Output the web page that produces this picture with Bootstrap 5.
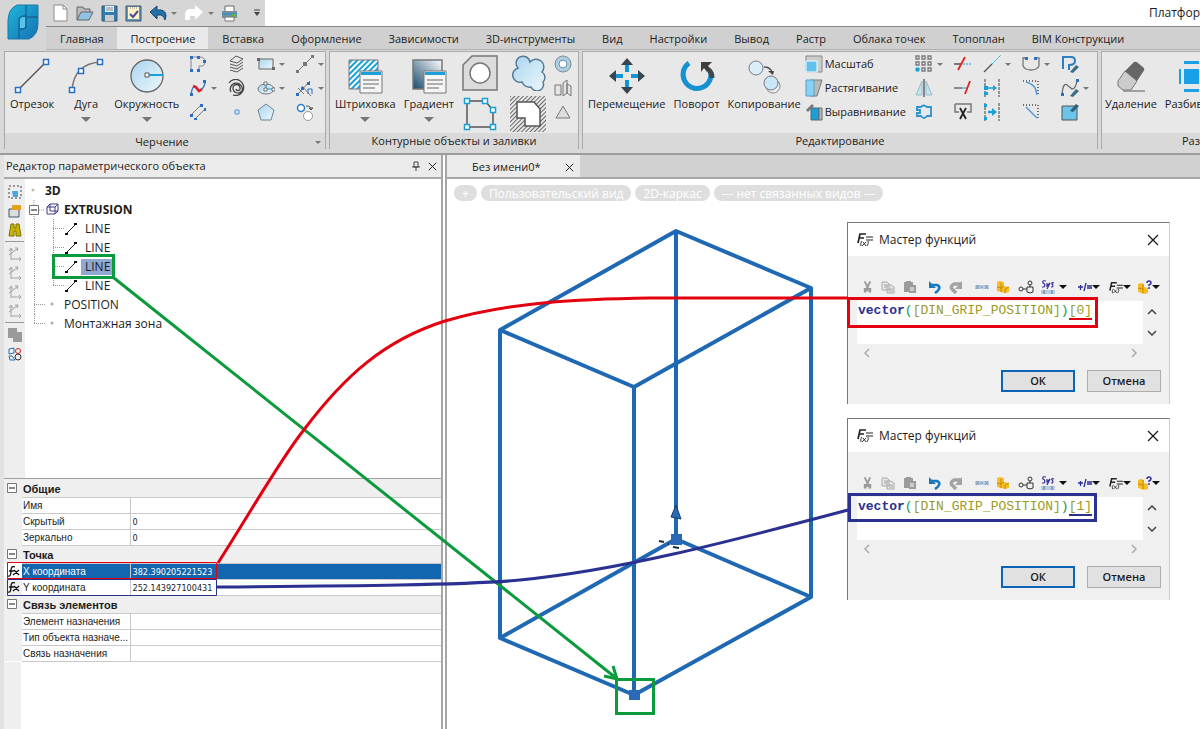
<!DOCTYPE html>
<html lang="ru">
<head>
<meta charset="utf-8">
<meta name="viewport" content="width=device-width, initial-scale=1">
<title>Платформа</title>
<link href="https://cdn.jsdelivr.net/npm/bootstrap@5.3.0/dist/css/bootstrap.min.css" rel="stylesheet">
<style>
  body { font: 12px/16px "Open Sans", "Noto Sans", sans-serif; color: #1c1c1c; background: #fff; }
  button { font: inherit; color: inherit; background: none; border: 0; padding: 0; }
  svg { display: block; flex: none; }

  /* title bar and tabs */
  .app-head { background: #d0d0d0; }
  .app-logo { width: 46px; flex: none; background: #d6d6d6; }
  .app-title { height: 26px; background: #fff; }
  .quick-bar { width: 219px; background: #d6d6d6; gap: 7px; padding-left: 7px; }
  .tab-strip { height: 24px; border-top: 1px solid #858585; border-bottom: 1px solid #b0b0b0; font-size: 11px; }
  .tab-strip a { color: inherit; text-decoration: none; padding: 4px 13px 0 14px; white-space: nowrap; }
  .tab-strip a.active { background: #e9e9e9; }

  /* ribbon */
  .ribbon { background: #d9d9d9; height: 105px; padding: 1px 0 4px 4px; gap: 3px; border-bottom: 2px solid #9c9c9c; font-size: 11px; }
  .tool-group { background: #e8e8e8; border: 1px solid #a9a9a9; }
  .group-draw { width: 322px; }
  .group-fill { width: 250px; }
  .group-edit { width: 516px; }
  .group-more { border-right: 0; min-width: 0; }
  .tools { height: 81px; padding: 0 0 0 1px; }
  .group-name { height: 18px; background: #d9d9d9; }
  .tool-big { display: flex; flex-direction: column; align-items: center; padding: 6px 4px 0; white-space: nowrap; }
  .tool-big span { margin-top: 2px; }
  .group-more .tool-big { padding-left: 2px; padding-right: 0; }
  .gap-a { gap: 6px; }
  .tool-cols { display: flex; gap: 5px; }
  .tool-col { width: 34px; flex: none; }
  .tool-col.slim { width: 24px; }
  .tool-col button, .tool-line { height: 24px; display: flex; align-items: center; gap: 4px; }
  .tool-line { white-space: nowrap; gap: 2px; }
  .tool-med { height: 41px; display: flex; align-items: center; }
  .caret { width: 0; height: 0; border: 3px solid transparent; border-top-color: #777; border-bottom: 0; display: block; flex: none; }
  .caret-lg { border-width: 5px; border-bottom: 0; margin-top: 5px; }
  .caret-dk { border-width: 4px; border-top-color: #111; border-bottom: 0; }

  /* object editor */
  .editor { width: 443px; border-left: 4px solid #e2e2e2; border-right: 2px solid #a6a6a6; }
  .pane-title { height: 24px; background: #ebebeb; border-bottom: 2px solid #aaa; padding: 0 4px 0 2px; font-size: 11px; }
  .tree-area { height: 300px; border-bottom: 1px solid #a0a0a0; }
  .side-bar { width: 21px; background: #eee; padding-top: 3px; }
  .side-bar button { height: 19px; display: flex; justify-content: center; align-items: center; width: 100%; }
  .side-bar hr { margin: 2px 1px; opacity: 1; border-color: #999; }
  .tree-list { padding-top: 2px; font-size: 12px; }
  .tree-list li { height: 19px; display: flex; align-items: center; }
  .tree-list .picked { background: #8fa9d3; }
  .prop-table { width: 100%; font: 10px/12px "Liberation Sans", Arial, sans-serif; border-collapse: collapse; table-layout: fixed; }
  .prop-table td, .prop-table th { padding: 2px 1px 0; border-bottom: 1px solid #c9c9c9; height: 16px; white-space: nowrap; overflow: hidden; font-weight: 400; }
  .prop-table td { border-left: 1px solid #c9c9c9; }
  .prop-table .sect th { height: 18px; background: #efefef; font-weight: 700; font-size: 11px; }
  .prop-table .tick-cell { background: #efefef; border-bottom: 0; padding: 0 3px; }
  .prop-table .now th, .prop-table .now td { background: #1266b0; color: #fff; }
  .prop-table .now .tick-cell { background: #fff; }
  .prop-table td { font-family: "DejaVu Sans Condensed", "Liberation Sans", sans-serif; font-size: 9px; padding-left: 2px; }
  .fill-strip { width: 17px; background: #efefef; }
  .c-tick { width: 18px; } .c-name { width: 108px; }

  /* drawing */
  .doc-area { border-left: 2px solid #a6a6a6; margin-left: 2px; }
  .doc-tabs { height: 24px; background: #d1d1d1; border-bottom: 2px solid #a6a6a6; }
  .doc-tab { width: 133px; background: #ebebeb; padding: 2px 6px 0 25px; font-size: 11px; }
  .view-pill { background: #dedede; color: #fff; border-radius: 8px; height: 16px; line-height: 15px; font-size: 12px; padding: 0 8px; }
  .view-bar { padding: 6px 7px; gap: 4px; }
  .model { left: 46px; top: 65px; }
  .marks { left: 0; top: 0; pointer-events: none; z-index: 5; }
  .workspace { z-index: 0; }

  /* function wizard windows */
  .wizard { width: 323px; background: #f0f0f0; border: 1px solid #777; border-right-color: #ccc; border-bottom: 0; left: 400px; height: 182px; }
  .wizard-1 { top: 67px; }
  .wizard-2 { top: 263px; }
  .wizard-head { height: 33px; background: #fff; padding: 0 10px 0 8px; gap: 6px; }
  .wizard-tools { height: 22px; margin: 20px 0 3px; padding: 0 9px 0 13px; }
  .code-line { height: 43px; width: 286px; margin-left: 9px; background: #fff; font: 13px/20px "Liberation Mono", monospace; color: #9a9a1c; padding-left: 1px; }
  .code-line b { color: #2a3190; } .code-line i { color: #159a3a; font-style: normal; }
  .code-line u { text-decoration: none; border-bottom: 2px solid #e3000f; }
  .wizard-2 .code-line u { border-color: #2a3190; }
  .wizard-btn { width: 74px; height: 22px; background: #e1e1e1; border: 1px solid #adadad; font-size: 11px; line-height: 18px; font-weight: 600; }
  .wizard-btn.main { border: 2px solid #0a64b8; }
  .wizard-foot { gap: 12px; padding: 9px 8px 0 0; }
</style>
</head>
<body class="d-flex flex-column min-vh-100 overflow-hidden">

<svg width="0" height="0" class="position-absolute" aria-hidden="true">
  <defs>
    <linearGradient id="sky" x1="0" y1="0" x2="1" y2="1"><stop offset="0" stop-color="#a9d5ef"/><stop offset="1" stop-color="#eef7fc"/></linearGradient>
    <linearGradient id="logo" x1="0" y1="0" x2="1" y2="1"><stop offset="0" stop-color="#1fb6d8"/><stop offset="1" stop-color="#1570b4"/></linearGradient>
    <linearGradient id="dusk" x1="0" y1="1" x2="1" y2="0"><stop offset="0" stop-color="#17496b"/><stop offset="1" stop-color="#fff"/></linearGradient>
    <pattern id="hatch" width="4" height="4" patternUnits="userSpaceOnUse" patternTransform="rotate(45)"><rect width="4" height="4" fill="#fff"/><rect width="2" height="4" fill="#18a0d8"/></pattern>
    <pattern id="hatch2" width="3" height="3" patternUnits="userSpaceOnUse" patternTransform="rotate(45)"><rect width="1" height="3" fill="#666"/></pattern>
    <symbol id="list-card" viewBox="0 0 24 24"><path d="M1 1h22v22H1z" fill="#f5f5f5" stroke="#777"/><path d="M2 2h20v3H2z" fill="#18a0d8"/><path d="M4 10h16M4 14h16M4 18h12" stroke="#666"/></symbol>
    <symbol id="axes" viewBox="0 0 16 16"><path d="M4 14V3M2 5l2-3 2 3M4 13h10M12 11l2 2-2 2M2 9l8-6M8 2l3 0-1 3" fill="none" stroke="#a3a3a3"/></symbol>
    <symbol id="seg" viewBox="0 0 14 14"><path d="M2 12 12 2" stroke="#222"/><path d="M1 11h3v2H1zM10 1h3v2h-3z" fill="#111"/></symbol>
    <symbol id="minus-box" viewBox="0 0 10 10"><path d="M.5.5h9v9h-9z" fill="#fff" stroke="#777"/><path d="M2 5h6" stroke="#111"/></symbol>
    <symbol id="close-x" viewBox="0 0 12 12"><path d="m1 1 10 10M11 1 1 11" stroke="currentColor" stroke-width="1.3"/></symbol>
    <symbol id="func" viewBox="0 0 17 15"><path d="M2 11 4 2h6M3 6h5" fill="none" stroke="#222" stroke-width="1.700"/><path d="M10 5h7M10 8h7" stroke="#222" stroke-width="1.200"/><path d="M6 9q-2 2-1 5M12 9q1 2-1 5M7 10l3 4M10 10l-4 4" fill="none" stroke="#222" stroke-width=".9"/></symbol>
    <symbol id="cut" viewBox="0 0 14 14"><path d="m4 1 4 8M10 1 6 9" stroke="#999" stroke-width="2"/><path d="M3 8h8v5H8V11H6v2H3z" fill="#999"/></symbol>
    <symbol id="copy" viewBox="0 0 14 14"><path d="M1 2h5l2 2v6H1zM6 5h4l3 2v6H6z" fill="#e6e6e6" stroke="#aaa"/><path d="M8 9h4M8 11h4M3 5h3M3 7h3" stroke="#aaa"/></symbol>
    <symbol id="paste" viewBox="0 0 14 14"><path d="M1 2h2V1h5v1h2v3h3v8H6v-1H1z" fill="#9b9b9b"/><path d="M7 7h4v4H7z" fill="#ccc"/></symbol>
    <symbol id="undo" viewBox="0 0 14 14"><path d="M3 5h6q3 1 2 4-1 2-4 4" fill="none" stroke="#1a78bd" stroke-width="2.6"/><path d="m1 1v7h7z" fill="#1a78bd"/></symbol>
    <symbol id="redo" viewBox="0 0 14 14"><path d="M12 4H5Q1 6 3 9l4 4" fill="none" stroke="#a3a3a3" stroke-width="3.500"/><path d="M13 1v8H6z" fill="#a3a3a3"/></symbol>
    <symbol id="chain" viewBox="0 0 14 6"><path d="M0 1h14v4H0z" fill="#b6cfe4"/><path d="m1 1 3 4M4 1 1 5M5 3h3M10 1l3 4M13 1l-3 4" stroke="#7b93aa"/></symbol>
    <symbol id="cubes" viewBox="0 0 14 14"><path d="M1 2 4 1l4 1v4l5 1v5l-4 1-4-1-4-1z" fill="#f6bd26"/><path d="M1 7l4 1V3M5 8v4M8 6l-3 2M9 9v4M9 9l4-2" fill="none" stroke="#b57f00" stroke-width=".8"/></symbol>
    <symbol id="gears" viewBox="0 0 16 14"><circle cx="3" cy="9" r="2" fill="none" stroke="#333"/><path d="M5 9h4V7h6v5q-3 2-6 0V9M12 7V4" fill="none" stroke="#333"/><circle cx="12" cy="3" r="2" fill="#eee" stroke="#333"/></symbol>
    <symbol id="sys" viewBox="0 0 14 14"><path d="M5 1Q1 0 2 3q3 1 1 4H1M6 3v3l3-3-3 6M13 3q-3-1-2 1 2 2 0 3h-1" fill="none" stroke="#383098" stroke-width="1.2"/><path d="M0 10h14v4H0z" fill="#b6cfe4"/><path d="m2 10 2 4m0-4-2 4m8-4 2 4m0-4-2 4" stroke="#7b93aa"/></symbol>
    <symbol id="plusminus" viewBox="0 0 14 10"><path d="M0 5h5M2.500 3v5M8 1 6 9M9 4h5M9 6h5" stroke="#2a2f95" stroke-width="1.300"/></symbol>
    <symbol id="cubes-help" viewBox="0 0 14 14"><path d="M0 4l3-1 3 1v3l4 1v5l-4 1-6-2z" fill="#f6bd26"/><path d="M0 8l5 1V4M5 9v4" fill="none" stroke="#b57f00" stroke-width=".8"/><path d="M9 3q0-2 2-2t2 2q0 1-2 2v1M11 7v2" fill="none" stroke="#383098" stroke-width="1.500"/></symbol>
  </defs>
</svg>

<header class="app-head d-flex overflow-hidden">
  <a href="#" class="app-logo d-flex justify-content-center pt-1" aria-label="Меню приложения">
    <svg width="32" height="36" viewBox="0 0 32 36"><path d="M10 1h21v19q0 11-9 15H1V17Q1 5 10 1z" fill="url(#logo)" stroke="#1a78a8"/><path d="M19 1v21q0 3-3 3h-4v-9q0-4 5-4h2M12 25v10M19 13h12" fill="none" stroke="#13567f"/><path d="M13 24v-8q0-3 5-3v9q0 2-3 2z" fill="#56c4ec"/></svg>
  </a>
  <div class="flex-fill">
    <div class="app-title d-flex align-items-center">
      <div class="quick-bar d-flex align-items-center h-100 flex-shrink-0">
        <button aria-label="Новый"><svg width="16" height="18" viewBox="0 0 16 18"><path d="M1 1h9l4 4v12H1z" fill="#fff" stroke="#8c8c8c"/><path d="M10 1v4h4" fill="none" stroke="#8c8c8c"/></svg></button>
        <button aria-label="Открыть"><svg width="18" height="16" viewBox="0 0 18 16"><path d="M1 15V2h6l1 2h6v3" fill="#bbb" stroke="#666"/><path d="M1 15 5 7h12l-4 8z" fill="#8fc3e4" stroke="#666"/></svg></button>
        <button aria-label="Сохранить"><svg width="17" height="17" viewBox="0 0 17 17"><path d="M1 1h15v15H1z" fill="#2c7db3" stroke="#456"/><path d="M4 1h9v6H4z" fill="#e5eef4"/><path d="M4 10h9v6H4z" fill="#ccc"/><path d="M5 3h7M5 5h7" stroke="#888"/></svg></button>
        <button aria-label="Сохранить как"><svg width="17" height="17" viewBox="0 0 17 17"><path d="M1 1h15v15H1z" fill="#5b9cc5" stroke="#456"/><path d="M3 2h11v12H3z" fill="#fff3c4"/><path d="m5 9 3 3 5-6" fill="none" stroke="#4a4a9c" stroke-width="2"/><path d="M5 3h7" stroke="#888" stroke-dasharray="1 1"/></svg></button>
        <button class="d-flex align-items-center gap-1" aria-label="Отменить"><svg width="18" height="16" viewBox="0 0 18 16"><path d="m1 7 7-6v4h4q5 1 5 6l-1 4q-1-4-4-5H8v4z" fill="#2471a8" stroke="#174a70"/></svg><span class="caret"></span></button>
        <button class="d-flex align-items-center gap-1" aria-label="Повторить"><svg width="20" height="18" viewBox="0 0 20 18"><path d="M19 8 11 1v4H5Q1 6 1 11v5h5v-4h5v4z" fill="#fff"/></svg><span class="caret"></span></button>
        <button aria-label="Печать"><svg width="17" height="17" viewBox="0 0 17 17"><path d="M4 1h9v6H4z" fill="#fff" stroke="#666"/><path d="M1 6h15v7H1z" fill="#7c8e9a"/><path d="M1 8h15v2H1z" fill="#3e93c4"/><path d="M11 9h4v3h-4z" fill="#62b345"/><path d="M4 12h9v4H4z" fill="#fff" stroke="#777"/></svg></button>
        <button class="ms-2" aria-label="Настройка панели"><svg width="8" height="8" viewBox="0 0 8 8"><path d="M1 1h6" stroke="#444"/><path d="M1 3h6L4 7z" fill="#444"/></svg></button>
      </div>
      <span class="ms-auto text-nowrap">Платфор</span>
    </div>
    <nav class="tab-strip d-flex">
      <a href="#">Главная</a><a href="#" class="active">Построение</a><a href="#">Вставка</a><a href="#">Оформление</a><a href="#">Зависимости</a><a href="#">3D-инструменты</a><a href="#">Вид</a><a href="#">Настройки</a><a href="#">Вывод</a><a href="#">Растр</a><a href="#">Облака точек</a><a href="#">Топоплан</a><a href="#">BIM Конструкции</a>
    </nav>
  </div>
</header>

<div class="ribbon d-flex overflow-hidden">
  <section class="tool-group group-draw flex-shrink-0">
    <div class="tools d-flex gap-a">
      <button class="tool-big"><svg width="36" height="36" viewBox="0 0 36 36"><path d="M4 32 32 4" stroke="#555" stroke-width="1.500"/><path d="M1.500 29.500h5v5h-5zM29.500 1.500h5v5h-5z" fill="#fff" stroke="#2b6fc2" stroke-width="1.500"/></svg><span>Отрезок</span></button>
      <button class="tool-big"><svg width="36" height="36" viewBox="0 0 36 36"><path d="M4 32Q6 6 32 4" fill="none" stroke="#777" stroke-width="1.500"/><path d="M1.500 29.500h5v5h-5zM29.500 1.500h5v5h-5zM10.500 10.500h5v5h-5z" fill="#fff" stroke="#2b6fc2" stroke-width="1.500"/></svg><span>Дуга</span><i class="caret caret-lg"></i></button>
      <button class="tool-big px-0"><svg width="36" height="36" viewBox="0 0 36 36"><circle cx="18" cy="18" r="16" fill="url(#sky)" stroke="#666" stroke-width="1.300"/><path d="M20 17h14" stroke="#18a0d8" stroke-width="2"/><path d="M16 15h4v4h-4z" fill="#fff" stroke="#555"/></svg><span>Окружность</span><i class="caret caret-lg"></i></button>
      <div class="tool-cols ms-1">
        <div class="tool-col">
          <button aria-label="Полилиния"><svg width="18" height="18" viewBox="0 0 18 18"><path d="M2 16V2h9q5 0 5 5t-6 4v5" fill="none" stroke="#888"/><path d="M1 1h3v3H1zM8 1h3v3H8zM1 14h3v3H1zM8 14h3v3H8zM14 5h3v3h-3z" fill="#2b6fc2"/></svg></button>
          <button aria-label="Сплайн"><svg width="18" height="18" viewBox="0 0 18 18"><path d="M2 16Q3 7 6 8q4 7 7 2 3-3 3-8" fill="none" stroke="#3b73b9" stroke-width="1.300"/><path d="m4 7 3 1 3 4 3-2" fill="none" stroke="#e02030" stroke-width="2.500"/><path d="M1 14h3v3H1zM14 1h3v3h-3z" fill="#2b6fc2"/></svg><i class="caret"></i></button>
          <button aria-label="Мультилиния"><svg width="18" height="18" viewBox="0 0 18 18"><path d="M2 12 12 2M6 16 16 6" stroke="#777"/><path d="M1 11h3v3H1zM11 1h3v3h-3zM5 15h3v2H5zM15 5h2v3h-2z" fill="#2b6fc2"/></svg></button>
        </div>
        <div class="tool-col slim">
          <button aria-label="Слои"><svg width="18" height="18" viewBox="0 0 18 18"><path d="m2 6 6-5 7 3-6 4zM2 9l7 2 6-4M2 12l7 2 6-4M2 15l7 2 6-4" fill="none" stroke="#555"/></svg></button>
          <button aria-label="Спираль"><svg width="18" height="18" viewBox="0 0 18 18"><path d="M1 4A8 8 0 1 1 5 16M3 13A6 6 0 1 1 14 12 5 5 0 0 1 5 9 3.500 3.500 0 0 1 12 9 2 2 0 0 1 8 10" fill="none" stroke="#444" stroke-width="1.300"/></svg></button>
          <button aria-label="Точка"><svg width="18" height="18" viewBox="0 0 18 18"><path d="M7 7h4v4H7z" fill="#cfe4f7" stroke="#5d93d6"/></svg></button>
        </div>
        <div class="tool-col">
          <button aria-label="Прямоугольник"><svg width="18" height="18" viewBox="0 0 18 18"><path d="M2 4h14v10H2z" fill="url(#sky)" stroke="#666"/><path d="M0 3h3v3H0zM15 12h3v3h-3z" fill="#666"/></svg><i class="caret"></i></button>
          <button aria-label="Эллипс"><svg width="18" height="18" viewBox="0 0 18 18"><ellipse cx="9" cy="10" rx="8" ry="5" fill="url(#sky)" stroke="#777"/><path d="M9 10V4M9 10h7" stroke="#18a0d8"/><path d="M7 3h3v3H7zM7 9h3v3H7zM15 9h3v3h-3z" fill="#fff" stroke="#555" stroke-width=".8"/></svg><i class="caret"></i></button>
          <button aria-label="Многоугольник"><svg width="18" height="18" viewBox="0 0 18 18"><path d="m9 1 8 6-3 10H4L1 7z" fill="url(#sky)" stroke="#6c8494"/></svg></button>
        </div>
        <div class="tool-col">
          <button aria-label="Вспомогательная прямая"><svg width="18" height="18" viewBox="0 0 18 18"><path d="M1 17 17 1" stroke="#777"/><path d="M0 15h3v3H0zM7 7h4v4H7zM15 0h3v3h-3z" fill="#777"/></svg><i class="caret"></i></button>
          <button aria-label="Деление"><svg width="18" height="18" viewBox="0 0 18 18"><path d="M1 16 14 2M6 7l9 10M2 9l6 6" stroke="#777"/><path d="M0 14h3v3H0zM5 8h3v3H5zM11 3h3v3h-3z" fill="#2b6fc2"/><path d="M12 15v-5h4v5" fill="none" stroke="#2b6fc2"/></svg><i class="caret"></i></button>
          <button aria-label="Маркер"><svg width="18" height="18" viewBox="0 0 18 18"><circle cx="5" cy="5" r="3.500" fill="#fff" stroke="#2b7fd0" stroke-width="1.500"/><circle cx="12" cy="13" r="4.500" fill="#fff" stroke="#999"/><path d="M10 3q5 0 5 3M13 5h4l-2 2z" fill="none" stroke="#555"/></svg></button>
        </div>
      </div>
    </div>
    <div class="group-name d-flex align-items-center px-1"><span class="flex-fill text-center">Черчение</span><i class="caret"></i></div>
  </section>

  <section class="tool-group group-fill flex-shrink-0">
    <div class="tools d-flex">
      <button class="tool-big"><svg width="36" height="36" viewBox="0 0 36 36"><path d="M2 2h29v29H2z" fill="url(#hatch)" stroke="#777"/><use href="#list-card" x="12" y="12" width="24" height="24"/></svg><span>Штриховка</span><i class="caret caret-lg"></i></button>
      <button class="tool-big"><svg width="36" height="36" viewBox="0 0 36 36"><path d="M2 2h29v29H2z" fill="url(#dusk)" stroke="#777" stroke-width="1.500"/><use href="#list-card" x="12" y="12" width="24" height="24"/></svg><span>Градиент</span><i class="caret caret-lg"></i></button>
      <div class="d-flex ms-1 gap-2">
        <div>
          <button class="tool-med" aria-label="Область"><svg width="36" height="36" viewBox="0 0 36 36"><path d="M10 1h25v34H1V10z" fill="#dcdcdc" stroke="#777" stroke-width="1.500"/><circle cx="18" cy="18" r="10" fill="#fff" stroke="#777" stroke-width="1.500"/></svg></button>
          <button class="tool-med" aria-label="Контур"><svg width="36" height="36" viewBox="0 0 36 36"><path d="M5 5h18l8 9v17H5z" fill="none" stroke="#555" stroke-width="1.500"/><path d="M2.500 2.500h5v5h-5zM20.500 2.500h5v5h-5zM28.500 11.500h5v5h-5zM2.500 28.500h5v5h-5zM28.500 28.500h5v5h-5z" fill="#fff" stroke="#18a0d8" stroke-width="1.500"/></svg></button>
        </div>
        <div class="ms-1">
          <button class="tool-med" aria-label="Облако"><svg width="36" height="36" viewBox="0 0 36 36"><path d="M8 13A7 7 0 1 1 20 7 7 7 0 1 1 32 17 6.500 6.500 0 0 1 33 27 6.500 6.500 0 0 1 21 32 8 8 0 0 1 12 27 7 7 0 1 1 8 13z" fill="url(#sky)" stroke="#557b96" stroke-width="1.500"/></svg></button>
          <button class="tool-med" aria-label="Маскировка"><svg width="36" height="36" viewBox="0 0 36 36"><path d="M0 0h36v36H0z" fill="url(#hatch2)"/><path d="M7 6h17l6 7v17H15v-8H7z" fill="#fff" stroke="#555" stroke-width="1.500"/></svg></button>
        </div>
        <div class="tool-col slim">
          <button aria-label="Кольцо"><svg width="18" height="18" viewBox="0 0 18 18"><circle cx="9" cy="9" r="8" fill="#a9cfe9" stroke="#888"/><circle cx="9" cy="9" r="4" fill="#fff" stroke="#6f8fa8"/></svg></button>
          <button aria-label="Карта"><svg width="18" height="18" viewBox="0 0 18 18"><path d="M1 6h6v10H1zM9 4l4-3v13l-4 3zM13 5l4 2v10l-4-3z" fill="#e4e4e4" stroke="#777"/></svg></button>
          <button aria-label="Треугольник"><svg width="18" height="18" viewBox="0 0 18 18"><path d="m9 3 7 12H2z" fill="#ddd" stroke="#777"/></svg></button>
        </div>
      </div>
    </div>
    <div class="group-name text-center">Контурные объекты и заливки</div>
  </section>

  <section class="tool-group group-edit flex-shrink-0">
    <div class="tools d-flex">
      <button class="tool-big"><svg width="36" height="36" viewBox="0 0 36 36"><path d="M18 5v9M18 22v9M5 18h9M22 18h9" stroke="#0f96d8" stroke-width="4"/><path d="m18 0 6 7H12zM18 36l6-7H12zM0 18l7-6v12zM36 18l-7-6v12z" fill="#37474f"/></svg><span>Перемещение</span></button>
      <button class="tool-big"><svg width="36" height="36" viewBox="0 0 36 36"><path d="M10 5A14 14 0 1 0 32 15" fill="none" stroke="#1590d0" stroke-width="5"/><path d="M33 20q0-5-3-8" fill="none" stroke="#3d4a52" stroke-width="5"/><path d="M22 4h11l-4 4 3 3-4 3-3-4-3 4z" fill="#3d3d3d"/></svg><span>Поворот</span></button>
      <button class="tool-big"><svg width="36" height="36" viewBox="0 0 36 36"><circle cx="10" cy="10" r="7" fill="#d9eef8" stroke="#778"/><circle cx="27" cy="28" r="7" fill="#eee" stroke="#888"/><circle cx="25" cy="25" r="7" fill="#c8e6f5" stroke="#778"/><path d="M18 9q6 0 8 5" fill="none" stroke="#555" stroke-width="1.500"/><path d="M22 13h6l-1 4z" fill="#444"/></svg><span>Копирование</span></button>
      <div class="tool-cols">
        <div class="me-1">
          <button class="tool-line"><svg width="18" height="18" viewBox="0 0 18 18"><path d="M1 1h16v16H1z" fill="#ccc" stroke="#888"/><path d="M1 6h11v11H1z" fill="#5fc1ec" stroke="#fff"/></svg>Масштаб</button>
          <button class="tool-line"><svg width="18" height="18" viewBox="0 0 18 18"><path d="M6 1h11l-5 16H6z" fill="#bbb" stroke="#777"/><path d="M1 1h8v16H1z" fill="#8dd1f0" stroke="#4aa3cc"/></svg>Растягивание</button>
          <button class="tool-line"><svg width="18" height="18" viewBox="0 0 18 18"><path d="M6 5h8v12H6z" fill="#18a0d8" stroke="#567"/><path d="M14 5h3v12h-3z" fill="#bbb" stroke="#666"/><path d="m1 7 6-6 2 2-6 6z" fill="#777"/></svg>Выравнивание</button>
        </div>
        <div class="tool-col">
          <button aria-label="Массив"><svg width="18" height="18" viewBox="0 0 18 18"><path d="M1 1h3v3H1zM7 1h3v3H7zM13 1h3v3h-3zM1 7h3v3H1zM7 7h3v3H7zM13 7h3v3h-3zM7 13h3v3H7zM13 13h3v3h-3z" fill="#eee" stroke="#777" stroke-width="1.300"/><path d="M1 13h3v3H1z" fill="#18a0d8" stroke="#18a0d8"/></svg><i class="caret"></i></button>
          <button aria-label="Зеркало"><svg width="18" height="18" viewBox="0 0 18 18"><path d="M7 2v14H1zM11 2v14h6z" fill="#c5e4f3" stroke="#9bc"/><path d="M9 0v18" stroke="#666" stroke-width="1.500"/></svg></button>
          <button aria-label="Подобие"><svg width="18" height="18" viewBox="0 0 18 18"><path d="M2 4h4q2-3 6 0h4v9h-4q-3 4-6 0H2v-3h3V7H2z" fill="#e8e8e8" stroke="#2b93cf" stroke-width="1.800"/></svg></button>
        </div>
        <div class="tool-col slim">
          <button aria-label="Обрезка"><svg width="18" height="18" viewBox="0 0 18 18"><path d="M0 9h7" stroke="#555" stroke-width="1.500"/><path d="M9 9h9" stroke="#18a0d8" stroke-dasharray="2 1"/><path d="m4 15 7-13" stroke="#d22" stroke-width="1.800"/></svg></button>
          <button aria-label="Удлинение"><svg width="18" height="18" viewBox="0 0 18 18"><path d="M0 9h8" stroke="#555" stroke-width="1.300"/><path d="M8 9h5" stroke="#18a0d8"/><path d="m11 15 5-13" stroke="#d22" stroke-width="1.800"/></svg></button>
          <button aria-label="Разрыв"><svg width="18" height="18" viewBox="0 0 18 18"><path d="M1 1h16v8h-4M5 9H1V1" fill="none" stroke="#777" stroke-width="1.500"/><path d="m6 5 6 11M12 5 6 16" stroke="#222" stroke-width="1.800"/></svg></button>
        </div>
        <div class="tool-col">
          <button aria-label="Продление"><svg width="18" height="18" viewBox="0 0 18 18"><path d="M1 17 9 9" stroke="#555" stroke-width="1.300"/><path d="m9 9 9-9" stroke="#18a0d8" stroke-dasharray="2 1"/></svg><i class="caret"></i></button>
          <button aria-label="Сопряжение точек"><svg width="18" height="18" viewBox="0 0 18 18"><path d="M2 0v18M16 0v18" stroke="#777" stroke-dasharray="3 1" stroke-width="1.500"/><path d="M3 9h9" stroke="#18a0d8" stroke-width="1.500"/><path d="M10 6l4 3-4 3zM1 7h4v4H1zM1 13h4v3H1z" fill="#18a0d8"/></svg></button>
          <button aria-label="Выравнивание точек"><svg width="18" height="18" viewBox="0 0 18 18"><path d="M2 0v18M16 0v18" stroke="#777" stroke-dasharray="3 1" stroke-width="1.500"/><path d="M5 9h5" stroke="#18a0d8" stroke-width="2.500"/><path d="M9 5l5 4-5 4zM1 1h3v3H1zM1 14h3v3H1z" fill="#18a0d8"/></svg></button>
        </div>
        <div class="tool-col">
          <button aria-label="Соединение"><svg width="18" height="18" viewBox="0 0 18 18"><path d="M4 3H1v8q2 4 8 4t8-4V3h-3" fill="none" stroke="#777" stroke-width="1.300"/><path d="M3 2h3v3H3zM12 2h3v3h-3z" fill="#2b6fc2"/></svg><i class="caret"></i></button>
          <button aria-label="Скругление"><svg width="18" height="18" viewBox="0 0 18 18"><path d="M1 2h15v15" fill="none" stroke="#444" stroke-dasharray="1 2" stroke-width="1.500"/><path d="M4 3q10 2 11 13" fill="none" stroke="#5b96d8" stroke-width="1.500"/></svg></button>
          <button aria-label="Фаска"><svg width="18" height="18" viewBox="0 0 18 18"><path d="M1 2h15v15" fill="none" stroke="#444" stroke-dasharray="1 2" stroke-width="1.500"/><path d="m4 4 11 11" stroke="#5b96d8" stroke-width="1.500"/></svg></button>
        </div>
        <div class="tool-col">
          <button aria-label="Правка полилинии"><svg width="18" height="18" viewBox="0 0 18 18"><path d="M2 14V2h8q4 0 4 4t-6 4v5" fill="none" stroke="#2b7fc2" stroke-width="2"/><path d="m9 17 6-7 3 2-6 6z" fill="#3b6d85"/></svg></button>
          <button aria-label="Правка сплайна"><svg width="18" height="18" viewBox="0 0 18 18"><path d="M1 16Q2 3 6 6t5 4q4 0 5-9" fill="none" stroke="#666" stroke-width="1.300"/><path d="m9 17 6-7 3 2-6 6z" fill="#3b6d85"/><path d="M15 0h3v3h-3zM0 14h3v3H0z" fill="#2b6fc2"/></svg><i class="caret"></i></button>
          <button aria-label="Правка штриховки"><svg width="18" height="18" viewBox="0 0 18 18"><path d="M1 3h15v14H1z" fill="#6cc4ea" stroke="#555"/><path d="m9 8 6-7 3 2-6 6z" fill="#2d6078"/></svg></button>
        </div>
      </div>
    </div>
    <div class="group-name text-center">Редактирование</div>
  </section>

  <section class="tool-group group-more flex-fill">
    <div class="tools d-flex gap-a">
      <button class="tool-big"><svg width="36" height="36" viewBox="0 0 36 36"><path d="m5 23 7-10 12 10-6 9h-8l-5-4z" fill="#ccc" stroke="#777"/><path d="M12 13 21 4q2-1 4 1l6 5q1 2-1 4l-6 9z" fill="#666"/><path d="M10 33h22" stroke="#888" stroke-width="1.500"/></svg><span>Удаление</span></button>
      <button class="tool-big align-items-end"><svg width="24" height="36" viewBox="0 0 24 36"><path d="M5 11h15v15H5zM5 3h15v3H5zM5 31h15v3H5zM0 11h2v15H0zM23 11h1v15h-1z" fill="#18a0e8"/></svg><span>Разбив</span></button>
    </div>
    <div class="group-name text-end">Раз</div>
  </section>
</div>

<main class="workspace d-flex flex-fill position-relative">
  <aside class="editor d-flex flex-column flex-shrink-0">
    <div class="pane-title d-flex align-items-center">
      <span class="flex-fill">Редактор параметрического объекта</span>
      <button class="me-2" aria-label="Закрепить"><svg width="8" height="10" viewBox="0 0 8 10"><path d="M2 1h4v5H2zM0 6h8M4 6v4" fill="none" stroke="#444"/></svg></button>
      <button aria-label="Закрыть"><svg width="9" height="9"><use href="#close-x"/></svg></button>
    </div>
    <div class="tree-area d-flex">
      <div class="side-bar">
        <button aria-label="Выбор"><svg width="14" height="14" viewBox="0 0 14 14"><path d="M1 1h12v12H1z" fill="none" stroke="#444" stroke-dasharray="2 2"/><path d="M4 6h6v6H5z" fill="#4aa7e0"/></svg></button>
        <button aria-label="Свойства"><svg width="14" height="14" viewBox="0 0 14 14"><path d="M1 5h10v8H1z" fill="#ddd" stroke="#456"/><path d="M4 1h9v5H4z" fill="#e0a21c"/></svg></button>
        <button aria-label="Поиск"><svg width="14" height="14" viewBox="0 0 14 14"><path d="M3 1h3v4h2V1h3l2 12H8V8H6v5H1z" fill="#c9b400" stroke="#7c7000"/></svg></button>
        <hr>
        <button aria-label="Ось X"><svg width="16" height="16"><use href="#axes"/></svg></button>
        <button aria-label="Ось Y"><svg width="16" height="16"><use href="#axes"/></svg></button>
        <button aria-label="Ось Z"><svg width="16" height="16"><use href="#axes"/></svg></button>
        <button aria-label="Оси XYZ"><svg width="16" height="16"><use href="#axes"/></svg></button>
        <hr>
        <button aria-label="Объединить"><svg width="14" height="14" viewBox="0 0 14 14"><path d="M0 0h9v4h5v10H5v-4H0z" fill="#9a9a9a"/></svg></button>
        <button aria-label="Связи"><svg width="14" height="14" viewBox="0 0 14 14"><path d="M1 7V2l5-1v5zM1 9h3l3 4H2z" fill="none" stroke="#2a6da8"/><circle cx="10" cy="4" r="2.500" fill="none" stroke="#d22"/><circle cx="10" cy="10" r="3" fill="none" stroke="#333"/></svg></button>
      </div>
      <ul class="tree-list list-unstyled mb-0 flex-fill">
        <li class="fw-bold"><svg width="20" height="19" viewBox="0 0 20 19"><circle cx="8" cy="9" r="1.500" fill="#bbb"/></svg>3D</li>
        <li class="fw-bold"><svg width="39" height="19" viewBox="0 0 39 19"><path d="M9 0v19M14 10h6" stroke="#999" stroke-dasharray="1 1"/><use href="#minus-box" x="4" y="5" width="10" height="10"/><path d="M22 7h8v7h-8zM25 4h8v7h-8zM22 7l3-3M30 7l3-3M30 14l3-3" fill="#fff" fill-opacity=".5" stroke="#3a3a8c"/></svg>EXTRUSION</li>
        <li><svg width="56" height="19" viewBox="0 0 56 19"><path d="M9.500 0v19M28.500 0v19M28 9.500h12" stroke="#999" stroke-dasharray="1 1"/><use href="#seg" x="39" y="3" width="14" height="14"/></svg><span class="px-1">LINE</span></li>
        <li><svg width="56" height="19" viewBox="0 0 56 19"><path d="M9.500 0v19M28.500 0v19M28 9.500h12" stroke="#999" stroke-dasharray="1 1"/><use href="#seg" x="39" y="3" width="14" height="14"/></svg><span class="px-1">LINE</span></li>
        <li><svg width="56" height="19" viewBox="0 0 56 19"><path d="M9.500 0v19M28.500 0v19M28 9.500h12" stroke="#999" stroke-dasharray="1 1"/><use href="#seg" x="39" y="3" width="14" height="14"/></svg><span class="px-1 picked">LINE</span></li>
        <li><svg width="56" height="19" viewBox="0 0 56 19"><path d="M9.500 0v19M28.500 0v10M28 9.500h12" stroke="#999" stroke-dasharray="1 1"/><use href="#seg" x="39" y="3" width="14" height="14"/></svg><span class="px-1">LINE</span></li>
        <li><svg width="39" height="19" viewBox="0 0 39 19"><path d="M9.500 0v19M9 9.500h12" stroke="#999" stroke-dasharray="1 1"/><circle cx="27" cy="9" r="1.500" fill="#aaa"/></svg>POSITION</li>
        <li><svg width="39" height="19" viewBox="0 0 39 19"><path d="M9.500 0v10M9 9.500h12" stroke="#999" stroke-dasharray="1 1"/><circle cx="27" cy="9" r="1.500" fill="#aaa"/></svg>Монтажная зона</li>
      </ul>
    </div>
    <table class="prop-table">
      <colgroup><col class="c-tick"><col class="c-name"><col></colgroup>
      <tbody>
        <tr class="sect"><th class="tick-cell"><svg width="10" height="10"><use href="#minus-box"/></svg></th><th colspan="2" scope="rowgroup">Общие</th></tr>
        <tr><th class="tick-cell"></th><th scope="row">Имя</th><td></td></tr>
        <tr><th class="tick-cell"></th><th scope="row">Скрытый</th><td>0</td></tr>
        <tr><th class="tick-cell"></th><th scope="row">Зеркально</th><td>0</td></tr>
        <tr class="sect"><th class="tick-cell"><svg width="10" height="10"><use href="#minus-box"/></svg></th><th colspan="2" scope="rowgroup">Точка</th></tr>
        <tr class="now"><th class="tick-cell"><svg width="13" height="11" viewBox="0 0 13 11"><path d="M1 10q3 1 3-5t4-4M2 5h5M7 4l5 5M12 4 6 9" fill="none" stroke="#111" stroke-width="1.300"/></svg></th><th scope="row">X координата</th><td>382.390205221523</td></tr>
        <tr><th class="tick-cell"><svg width="13" height="11" viewBox="0 0 13 11"><path d="M1 10q3 1 3-5t4-4M2 5h5M7 4l5 5M12 4 6 9" fill="none" stroke="#111" stroke-width="1.300"/></svg></th><th scope="row">Y координата</th><td>252.143927100431</td></tr>
        <tr class="sect"><th class="tick-cell"><svg width="10" height="10"><use href="#minus-box"/></svg></th><th colspan="2" scope="rowgroup">Связь элементов</th></tr>
        <tr><th class="tick-cell"></th><th scope="row">Элемент назначения</th><td></td></tr>
        <tr><th class="tick-cell"></th><th scope="row">Тип объекта назначе...</th><td></td></tr>
        <tr><th class="tick-cell"></th><th scope="row">Связь назначения</th><td></td></tr>
      </tbody>
    </table>
    <div class="fill-strip flex-fill"></div>
  </aside>

  <section class="doc-area flex-fill position-relative">
    <div class="doc-tabs d-flex">
      <div class="doc-tab d-flex align-items-center justify-content-between"><span>Без имени0*</span><button aria-label="Закрыть вкладку"><svg width="9" height="9"><use href="#close-x"/></svg></button></div>
    </div>
    <div class="view-bar d-flex">
      <button class="view-pill">+</button><button class="view-pill">Пользовательский вид</button><button class="view-pill">2D-каркас</button><button class="view-pill">--- нет связанных видов ---</button>
    </div>

    <svg class="model position-absolute" width="330" height="480" viewBox="493 220 330 480" role="img" aria-label="Каркас призмы">
      <g fill="none" stroke="#1f68b3" stroke-width="4" stroke-linejoin="round">
        <path d="m676 231 135 57-177 99-134-57z"/>
        <path d="m676 539 135 58-177 98-134-57z"/>
        <path d="M676 231v308M811 288v309M634 387v308M500 330v308"/>
      </g>
      <path d="M671 534h11v11h-11zM629 690h11v11h-11z" fill="#2a68b8"/>
      <path d="m676 505 5 14-10-2z" fill="#2a68b8" stroke="#163a66"/>
      <path d="m659 541 5 1m4 2 1 0m4 3 6 1" stroke="#1c2c3c" stroke-width="2"/>
    </svg>

    <div class="wizard wizard-1 position-absolute" role="dialog" aria-label="Мастер функций X">
      <div class="wizard-head d-flex align-items-center"><svg width="17" height="15"><use href="#func"/></svg><span class="flex-fill">Мастер функций</span><button aria-label="Закрыть"><svg width="12" height="12"><use href="#close-x"/></svg></button></div>
      <div class="wizard-tools d-flex align-items-center justify-content-between">
        <button aria-label="Вырезать"><svg width="13" height="14"><use href="#cut"/></svg></button>
        <button aria-label="Копировать"><svg width="14" height="14"><use href="#copy"/></svg></button>
        <button aria-label="Вставить"><svg width="14" height="14"><use href="#paste"/></svg></button>
        <button class="ms-1" aria-label="Отменить"><svg width="14" height="14"><use href="#undo"/></svg></button>
        <button aria-label="Вернуть"><svg width="14" height="14"><use href="#redo"/></svg></button>
        <button class="ms-1" aria-label="Цепочка"><svg width="14" height="6"><use href="#chain"/></svg></button>
        <button aria-label="Объекты"><svg width="14" height="14"><use href="#cubes"/></svg></button>
        <button aria-label="Связи"><svg width="16" height="14"><use href="#gears"/></svg></button>
        <button class="d-flex align-items-center" aria-label="Системные"><svg width="14" height="14"><use href="#sys"/></svg><i class="caret caret-dk ms-1"></i></button>
        <button class="d-flex align-items-center ms-1" aria-label="Операторы"><svg width="14" height="10"><use href="#plusminus"/></svg><i class="caret caret-dk"></i></button>
        <button class="d-flex align-items-center" aria-label="Функции"><svg width="15" height="13"><use href="#func"/></svg><i class="caret caret-dk"></i></button>
        <button class="d-flex align-items-center" aria-label="Справка"><svg width="14" height="14"><use href="#cubes-help"/></svg><i class="caret caret-dk"></i></button>
      </div>
      <div class="d-flex">
        <div class="code-line" role="textbox" aria-label="Выражение"><b>vector</b><i>(</i>[DIN_GRIP_POSITION]<i>)</i><u>[0]</u></div>
        <div class="d-flex flex-column justify-content-around ms-1"><svg width="10" height="6" viewBox="0 0 10 6"><path d="m1 5 4-4 4 4" fill="none" stroke="#444" stroke-width="1.500"/></svg><svg width="10" height="6" viewBox="0 0 10 6"><path d="m1 1 4 4 4-4" fill="none" stroke="#444" stroke-width="1.500"/></svg></div>
      </div>
      <div class="d-flex justify-content-between ps-3 pe-4 pt-1"><svg width="6" height="10" viewBox="0 0 6 10"><path d="M5 1 1 5l4 4" fill="none" stroke="#aaa" stroke-width="1.500"/></svg><svg class="me-2" width="6" height="10" viewBox="0 0 6 10"><path d="m1 1 4 4-4 4" fill="none" stroke="#aaa" stroke-width="1.500"/></svg></div>
      <div class="wizard-foot d-flex justify-content-end pt-2 mt-1"><button class="wizard-btn main">ОК</button><button class="wizard-btn">Отмена</button></div>
    </div>

    <div class="wizard wizard-2 position-absolute" role="dialog" aria-label="Мастер функций Y">
      <div class="wizard-head d-flex align-items-center"><svg width="17" height="15"><use href="#func"/></svg><span class="flex-fill">Мастер функций</span><button aria-label="Закрыть"><svg width="12" height="12"><use href="#close-x"/></svg></button></div>
      <div class="wizard-tools d-flex align-items-center justify-content-between">
        <button aria-label="Вырезать"><svg width="13" height="14"><use href="#cut"/></svg></button>
        <button aria-label="Копировать"><svg width="14" height="14"><use href="#copy"/></svg></button>
        <button aria-label="Вставить"><svg width="14" height="14"><use href="#paste"/></svg></button>
        <button class="ms-1" aria-label="Отменить"><svg width="14" height="14"><use href="#undo"/></svg></button>
        <button aria-label="Вернуть"><svg width="14" height="14"><use href="#redo"/></svg></button>
        <button class="ms-1" aria-label="Цепочка"><svg width="14" height="6"><use href="#chain"/></svg></button>
        <button aria-label="Объекты"><svg width="14" height="14"><use href="#cubes"/></svg></button>
        <button aria-label="Связи"><svg width="16" height="14"><use href="#gears"/></svg></button>
        <button class="d-flex align-items-center" aria-label="Системные"><svg width="14" height="14"><use href="#sys"/></svg><i class="caret caret-dk ms-1"></i></button>
        <button class="d-flex align-items-center ms-1" aria-label="Операторы"><svg width="14" height="10"><use href="#plusminus"/></svg><i class="caret caret-dk"></i></button>
        <button class="d-flex align-items-center" aria-label="Функции"><svg width="15" height="13"><use href="#func"/></svg><i class="caret caret-dk"></i></button>
        <button class="d-flex align-items-center" aria-label="Справка"><svg width="14" height="14"><use href="#cubes-help"/></svg><i class="caret caret-dk"></i></button>
      </div>
      <div class="d-flex">
        <div class="code-line" role="textbox" aria-label="Выражение"><b>vector</b><i>(</i>[DIN_GRIP_POSITION]<i>)</i><u>[1]</u></div>
        <div class="d-flex flex-column justify-content-around ms-1"><svg width="10" height="6" viewBox="0 0 10 6"><path d="m1 5 4-4 4 4" fill="none" stroke="#444" stroke-width="1.500"/></svg><svg width="10" height="6" viewBox="0 0 10 6"><path d="m1 1 4 4 4-4" fill="none" stroke="#444" stroke-width="1.500"/></svg></div>
      </div>
      <div class="d-flex justify-content-between ps-3 pe-4 pt-1"><svg width="6" height="10" viewBox="0 0 6 10"><path d="M5 1 1 5l4 4" fill="none" stroke="#aaa" stroke-width="1.500"/></svg><svg class="me-2" width="6" height="10" viewBox="0 0 6 10"><path d="m1 1 4 4-4 4" fill="none" stroke="#aaa" stroke-width="1.500"/></svg></div>
      <div class="wizard-foot d-flex justify-content-end pt-2 mt-1"><button class="wizard-btn main">ОК</button><button class="wizard-btn">Отмена</button></div>
    </div>
  </section>

  <!-- callouts linking the editor rows with the drawing and the wizards -->
  <svg class="marks position-absolute" width="1110" height="574" viewBox="0 155 1110 574" aria-hidden="true">
    <g fill="none">
      <g stroke="#0b9a3c" stroke-width="3"><path d="M53.500 255.500h60v22h-60zM616.500 679.500h37v34h-37z"/><path d="m114 278 502 400M604 676l13 3-4-13"/></g>
      <g stroke="#e3000f" stroke-width="3"><path d="M218 563C250 513 280 460 303 431C345 375 385 340 445 321C510 302 580 299 650 298H848"/><path d="M848.500 298.500h248v28h-248z"/><path d="M7.500 562.500h209v16h-209z" stroke-width="1"/></g>
      <g stroke="#2a3190" stroke-width="3"><path d="M217 587C350 586 470 585 520 580C620 570 720 544 848 510"/><path d="M849.500 494.500h246v26h-246z"/><path d="M7.500 579.500h209v16h-209z" stroke-width="1"/></g>
    </g>
  </svg>
</main>

<script src="https://cdn.jsdelivr.net/npm/bootstrap@5.3.0/dist/js/bootstrap.bundle.min.js"></script>
</body>
</html>
